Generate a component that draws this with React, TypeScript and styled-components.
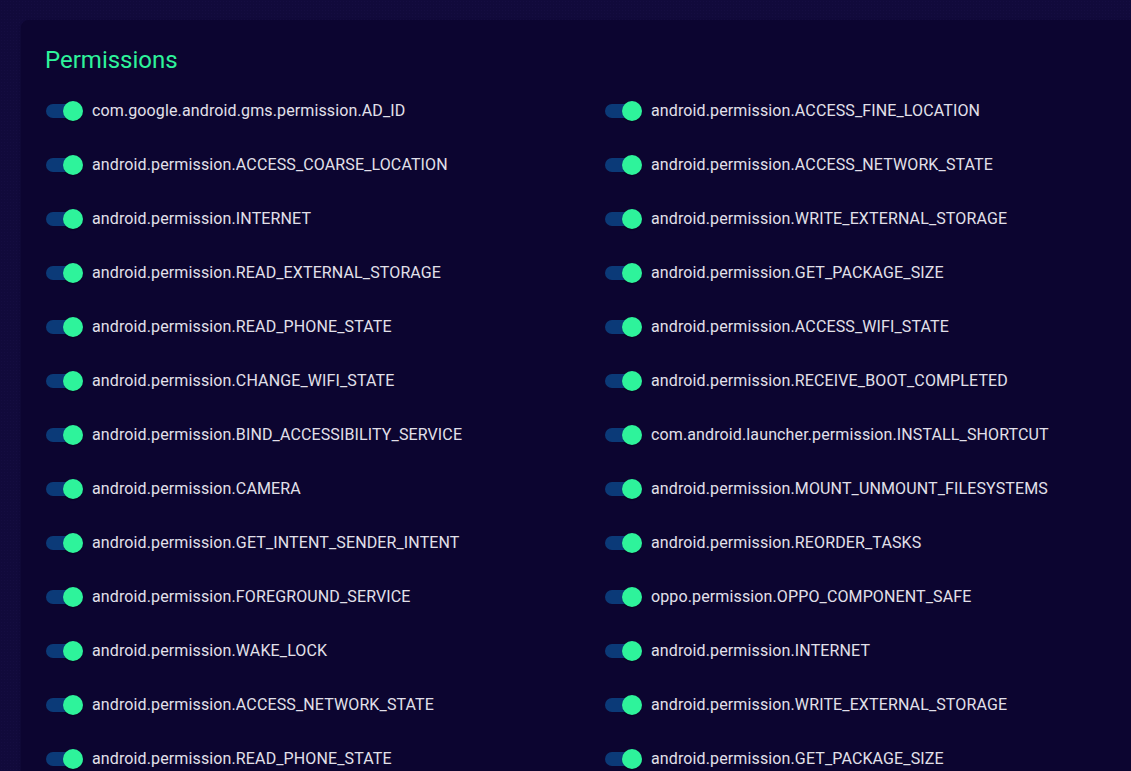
import * as React from 'react';
import styled, { createGlobalStyle } from 'styled-components';

const LEFT_PERMISSIONS = [
    'com.google.android.gms.permission.AD_ID',
    'android.permission.ACCESS_COARSE_LOCATION',
    'android.permission.INTERNET',
    'android.permission.READ_EXTERNAL_STORAGE',
    'android.permission.READ_PHONE_STATE',
    'android.permission.CHANGE_WIFI_STATE',
    'android.permission.BIND_ACCESSIBILITY_SERVICE',
    'android.permission.CAMERA',
    'android.permission.GET_INTENT_SENDER_INTENT',
    'android.permission.FOREGROUND_SERVICE',
    'android.permission.WAKE_LOCK',
    'android.permission.ACCESS_NETWORK_STATE',
    'android.permission.READ_PHONE_STATE',
];

const RIGHT_PERMISSIONS = [
    'android.permission.ACCESS_FINE_LOCATION',
    'android.permission.ACCESS_NETWORK_STATE',
    'android.permission.WRITE_EXTERNAL_STORAGE',
    'android.permission.GET_PACKAGE_SIZE',
    'android.permission.ACCESS_WIFI_STATE',
    'android.permission.RECEIVE_BOOT_COMPLETED',
    'com.android.launcher.permission.INSTALL_SHORTCUT',
    'android.permission.MOUNT_UNMOUNT_FILESYSTEMS',
    'android.permission.REORDER_TASKS',
    'oppo.permission.OPPO_COMPONENT_SAFE',
    'android.permission.INTERNET',
    'android.permission.WRITE_EXTERNAL_STORAGE',
    'android.permission.GET_PACKAGE_SIZE',
];

// interleave so the grid fills row by row
const PERMISSIONS = LEFT_PERMISSIONS.flatMap((left, i) => [left, RIGHT_PERMISSIONS[i]]);

const GlobalStyle = createGlobalStyle`
    html, body {
        margin: 0;
        padding: 0;
        background: #110a3b;
        overflow: hidden;
    }
    body {
        font-family: Roboto, 'Liberation Sans', sans-serif;
    }
`;

const PermissionToggle: React.FC<{ label: string }> = ({ label }) => {
    const [checked, setChecked] = React.useState(true);

    return (
        <ToggleLabel>
            <SwitchRoot>
                <SwitchInput type="checkbox" checked={checked} onChange={() => setChecked(!checked)} />
                <Track checked={checked} />
                <Thumb checked={checked} />
            </SwitchRoot>
            <LabelText>{label}</LabelText>
        </ToggleLabel>
    );
};

const App: React.FC = () => (
    <Page>
        <GlobalStyle />
        <Card>
            <Title>Permissions</Title>
            <Grid>
                {PERMISSIONS.map((permission, i) => (
                    <PermissionToggle key={i} label={permission} />
                ))}
            </Grid>
        </Card>
    </Page>
);

const Page = styled.div`
    padding: 20px 0 0 21px;
    min-height: 771px;
    box-sizing: border-box;
    background-color: #110a3b;
    background-image: radial-gradient(rgba(70, 60, 140, 0.08) 0.6px, transparent 0.8px);
    background-size: 3px 3px;
`;

const Card = styled.section`
    width: 1166px;
    background: #0c0530;
    border-radius: 8px;
    padding: 24px;
    box-sizing: border-box;
    box-shadow: 0 1px 3px rgba(0, 0, 0, 0.2);
`;

const Title = styled.h2`
    margin: 0 0 16px;
    font-size: 24px;
    font-weight: 400;
    line-height: 32px;
    color: #2ef39b;
`;

const Grid = styled.div`
    display: grid;
    grid-template-columns: 559px 559px;
    row-gap: 16px;
`;

const ToggleLabel = styled.label`
    display: flex;
    align-items: center;
    margin-left: -11px;
    height: 38px;
    cursor: pointer;
`;

const SwitchRoot = styled.span`
    position: relative;
    display: inline-block;
    width: 58px;
    height: 38px;
    flex-shrink: 0;
`;

const SwitchInput = styled.input`
    position: absolute;
    inset: 0;
    margin: 0;
    opacity: 0;
    cursor: pointer;
    z-index: 2;
`;

const Track = styled.span<{ checked: boolean }>`
    position: absolute;
    left: 12px;
    top: 12px;
    width: 34px;
    height: 14px;
    border-radius: 7px;
    background: ${(p) => (p.checked ? '#0b3a78' : '#555a70')};
`;

const Thumb = styled.span<{ checked: boolean }>`
    position: absolute;
    top: 9px;
    left: ${(p) => (p.checked ? '29px' : '9px')};
    width: 20px;
    height: 20px;
    border-radius: 50%;
    background: ${(p) => (p.checked ? '#2ef39b' : '#e0e0e0')};
    box-shadow: 0 2px 1px -1px rgba(0, 0, 0, 0.2), 0 1px 1px rgba(0, 0, 0, 0.14);
`;

const LabelText = styled.span`
    font-size: 16px;
    line-height: 24px;
    color: #e2e0ea;
    letter-spacing: 0.125px;
    white-space: nowrap;
`;

export default App;
